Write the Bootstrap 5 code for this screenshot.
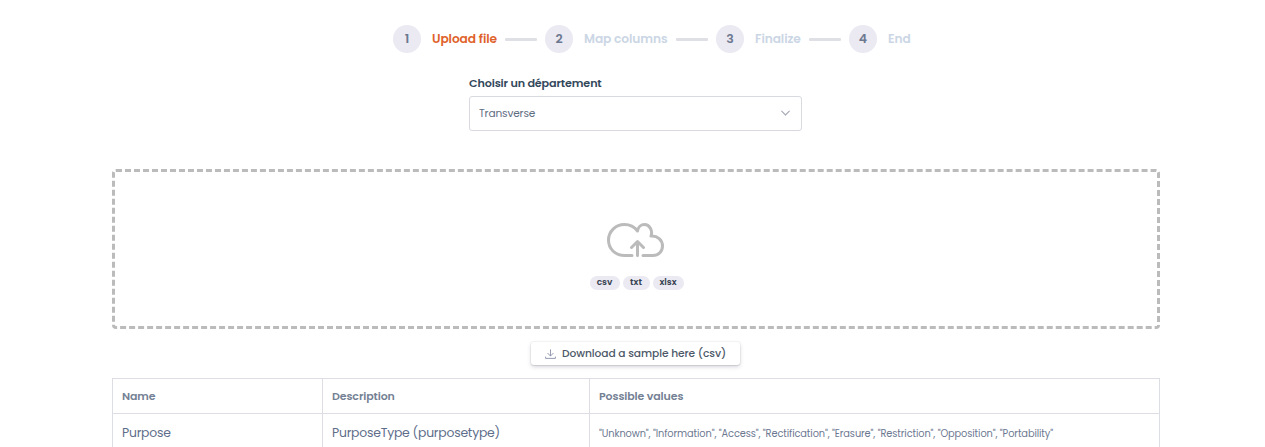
<!DOCTYPE html>
<html lang="fr">
<head>
<meta charset="utf-8">
<meta name="viewport" content="width=device-width, initial-scale=1">
<title>Upload file</title>
<link rel="stylesheet" href="https://cdn.jsdelivr.net/npm/bootstrap@5.3.0/dist/css/bootstrap.min.css">
<style>
body{font-family:Poppins,Inter,"Open Sans",sans-serif;font-size:13px;color:#5e6e8a;background:#fff}
.page-wrap{width:1049px;height:447px;overflow:hidden;margin-left:112px;padding-top:25px}
.steps{height:28px;margin-left:281px}
.step-no{width:28px;height:28px;background:#ebe9f1;color:#6b7890;font-size:12.5px;font-weight:600;line-height:1}
.step-title{margin-left:11px;color:#cbd6e5;font-size:12.2px;font-weight:600;line-height:28px;letter-spacing:-.08px}
.step-title.current{color:#e0622b}
.step-line{width:32px;height:3px;background:#dfdfe6;border-radius:1px;margin:1px 8px 0}
.dept{width:333px;margin:20px 0 0 357px}
.dept label{display:block;height:23px;line-height:20px;font-size:11.2px;font-weight:600;letter-spacing:-.15px;color:#33475b}
.dept-box{height:35px;border:1px solid #d8dae0;border-radius:3px;padding:0 10px 0 9px;font-size:10.6px;letter-spacing:-.15px;color:#5e6e82}
.dropzone{width:1048px;height:160px;margin-top:38px;border:3px dashed #bbb;border-radius:4px}
.cloud{margin:50px 2px 0 0}
.kinds{gap:3px;margin:18px 0 0 1px}
.kind{height:14px;line-height:13px;border-radius:7px;background:#ebe9f1;color:#344050;font-size:9px;font-weight:600;text-align:center}
.sample{width:209px;height:23px;margin:13px 0 0 419px;border:0;border-radius:3px;padding:0 0 0 14px;font-size:10.7px;font-weight:500;letter-spacing:-.08px;color:#4d5969;box-shadow:0 0 0 1px rgba(43,45,80,.04),0 2px 4px rgba(43,45,80,.18),0 1px 1px rgba(0,0,0,.08);background:#fff}
.sample .fit{margin-left:6px;padding-top:1px}
.fields{width:1048px;margin-top:13px;table-layout:fixed;border-color:#dcdee3;color:#5e6e8a}
.fields th{height:35px;padding:0 9px;font-size:11px;font-weight:600;letter-spacing:-.1px;color:#748194;vertical-align:middle}
.fields td{height:40px;padding:0 9px 1px;font-size:12.4px;font-weight:400;letter-spacing:-.22px;vertical-align:middle}
.fields td.vals{padding:2px 9px 0;font-size:9.8px;font-weight:400;letter-spacing:-.1px;color:#6b7890}
.fit{display:inline-block;white-space:nowrap}
</style>
</head>
<body>
<main class="page-wrap">
  <div class="steps d-flex align-items-center">
    <span class="step-no rounded-circle d-flex align-items-center justify-content-center">1</span>
    <span class="step-title current fit" style="width:65px">Upload file</span><span class="step-line"></span>
    <span class="step-no rounded-circle d-flex align-items-center justify-content-center">2</span>
    <span class="step-title fit" style="width:84px">Map columns</span><span class="step-line"></span>
    <span class="step-no rounded-circle d-flex align-items-center justify-content-center">3</span>
    <span class="step-title fit" style="width:46px">Finalize</span><span class="step-line"></span>
    <span class="step-no rounded-circle d-flex align-items-center justify-content-center">4</span>
    <span class="step-title fit" style="width:23px">End</span>
  </div>

  <div class="dept">
    <label for="dept"><span class="fit">Choisir un département</span></label>
    <div class="dept-box d-flex align-items-center justify-content-between" id="dept" role="combobox">
      <span class="fit">Transverse</span>
      <svg width="11" height="8" viewBox="0 0 11 8" fill="none" stroke="#a9adb8" stroke-width="1.2" stroke-linecap="round" stroke-linejoin="round"><path d="M1.700 1.200 5.500 5 9.300 1.200"/></svg>
    </div>
  </div>

  <div class="dropzone d-flex flex-column align-items-center">
    <svg class="cloud" width="58" height="36" viewBox="0 0 58 36" fill="none" stroke="#bbb" stroke-width="3" stroke-linecap="round" stroke-linejoin="round"><path d="M26 33.500H18.500C9 33.500 2.500 26.500 2.500 18S9.500 2.500 18.500 2.500C24 2.500 28.500 5 31.500 9C32 5 35 2.500 38.500 2.500C43.500 2.500 47 8.500 45 14C51.500 13.500 56.500 18 56.500 24C56.500 29.500 52.500 33.500 47 33.500H37"/><path d="M31.500 33.500V20M25.500 25.500 31.500 19.500 37.500 25.500"/></svg>
    <div class="kinds d-flex">
      <span class="kind" style="width:30px">csv</span><span class="kind" style="width:27px">txt</span><span class="kind" style="width:31px">xlsx</span>
    </div>
  </div>

  <button type="button" class="sample d-flex align-items-center">
    <svg width="11" height="10" viewBox="0 0 11 10" fill="none" stroke="#8a91a8" stroke-width=".9" stroke-linecap="round" stroke-linejoin="round"><path d="M5.500.8V6.800M2.800 4.300 5.500 7 8.200 4.300M.6 8V9.400H10.400V8"/></svg>
    <span class="fit">Download a sample here (csv)</span>
  </button>

  <table class="table table-bordered fields">
    <colgroup><col style="width:210px"><col style="width:267px"><col></colgroup>
    <thead><tr><th><span class="fit">Name</span></th><th><span class="fit">Description</span></th><th><span class="fit">Possible values</span></th></tr></thead>
    <tbody><tr><td><span class="fit">Purpose</span></td><td><span class="fit">PurposeType (purposetype)</span></td><td class="vals"><span class="fit">"Unknown", "Information", "Access", "Rectification", "Erasure", "Restriction", "Opposition", "Portability"</span></td></tr></tbody>
  </table>
</main>
<script src="https://cdn.jsdelivr.net/npm/bootstrap@5.3.0/dist/js/bootstrap.bundle.min.js"></script>
</body>
</html>
